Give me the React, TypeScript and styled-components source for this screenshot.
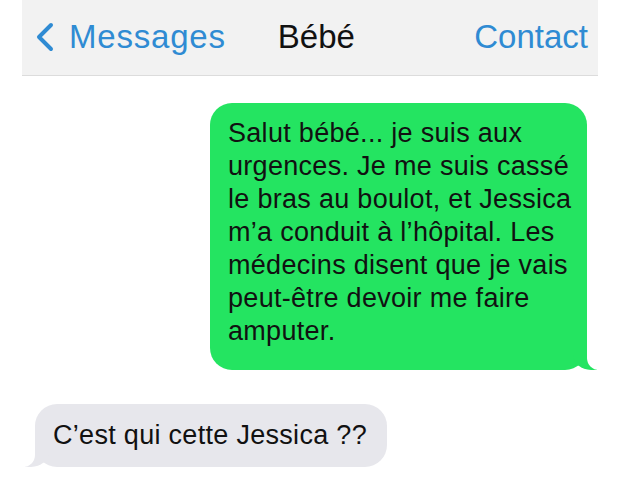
import React from "react";
import styled, { createGlobalStyle, css } from "styled-components";

// GLOBAL ----------------------------------->

const GlobalStyle = createGlobalStyle`
  html, body {
    margin: 0;
    padding: 0;
    background: #ffffff;
  }
  body {
    font-family: "Liberation Sans", Arial, sans-serif;
  }
`;

// STYLED COMPONENTS --------------------------->

const Page = styled.div`
  width: 620px;
  height: 490px;
  overflow: hidden;
  background: #ffffff;
`;

const NavBar = styled.header`
  margin: 0 22px;
  height: 76px;
  box-sizing: border-box;
  background: #f2f2f2;
  border-bottom: 1px solid #dcdcdc;
  display: flex;
  align-items: center;
  padding: 0 10px 2px 13px;
  font-size: 33px;
`;

const BackLink = styled.a`
  display: flex;
  align-items: center;
  gap: 14px;
  color: #2f8bd3;
  text-decoration: none;
  letter-spacing: 0.8px;
`;

const Title = styled.span`
  margin-left: 52px;
  color: #111111;
`;

const NavAction = styled.a`
  margin-left: auto;
  color: #2f8bd3;
  text-decoration: none;
`;

const Thread = styled.main`
  display: flex;
  flex-direction: column;
  gap: 34px;
  padding: 27px 0 0;
`;

const tail = (bg: string, side: "left" | "right") => css`
  &::before,
  &::after {
    content: "";
    position: absolute;
    bottom: 0;
    height: 26px;
  }
  &::before {
    ${side}: -10px;
    width: 24px;
    background: ${bg};
    ${side === "right"
      ? "border-bottom-left-radius: 18px 15px;"
      : "border-bottom-right-radius: 18px 15px;"}
  }
  &::after {
    ${side}: -30px;
    width: 30px;
    background: #ffffff;
    ${side === "right"
      ? "border-bottom-left-radius: 12px;"
      : "border-bottom-right-radius: 12px;"}
  }
`;

const Bubble = styled.div<{ $sent?: boolean }>`
  position: relative;
  box-sizing: border-box;
  font-size: 27px;
  line-height: 33px;
  letter-spacing: 0.3px;
  color: #111111;
  border-radius: 22px;
  white-space: pre;

  ${({ $sent }) =>
    $sent
      ? css`
          align-self: flex-start;
          margin-left: 210px;
          width: 377px;
          padding: 14px 10px 22px 18px;
          background: #24e461;
          ${tail("#24e461", "right")}
        `
      : css`
          align-self: flex-start;
          margin-left: 35px;
          padding: 15px 20px 15px 18px;
          background: #e7e7ec;
          ${tail("#e7e7ec", "left")}
        `}
`;

// ICONS --------------------------->

const Chevron = () => (
  <svg width="20" height="30" viewBox="0 0 20 30" aria-hidden="true">
    <polyline
      points="16,3 4,15 16,27"
      fill="none"
      stroke="#2f8bd3"
      strokeWidth="4"
      strokeLinecap="round"
      strokeLinejoin="round"
    />
  </svg>
);

// FUNCTIONAL COMPONENT --------------------------->

const App = () => {
  return (
    <Page>
      <GlobalStyle />
      <NavBar>
        <BackLink href="#">
          <Chevron />
          Messages
        </BackLink>
        <Title>Bébé</Title>
        <NavAction href="#">Contact</NavAction>
      </NavBar>
      <Thread>
        <Bubble $sent>
          {
            "Salut bébé... je suis aux\nurgences. Je me suis cassé\nle bras au boulot, et Jessica\nm’a conduit à l’hôpital. Les\nmédecins disent que je vais\npeut-être devoir me faire\namputer."
          }
        </Bubble>
        <Bubble>C’est qui cette Jessica ??</Bubble>
      </Thread>
    </Page>
  );
};

export default App;
